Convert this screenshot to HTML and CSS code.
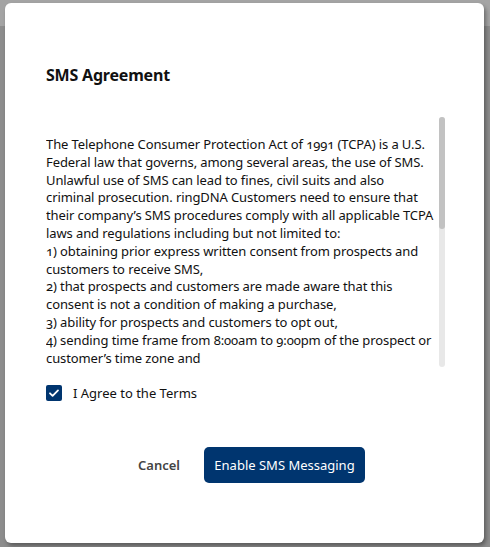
FILE: index.html
```html
<!DOCTYPE html>
<html lang="en">
<head>
<meta charset="utf-8">
<title>SMS Agreement</title>
<link rel="stylesheet" href="styles.css">
</head>
<body>
<div class="modal">
  <h2 class="title">SMS Agreement</h2>
  <div class="scroll-wrap">
    <div class="scroll">
      <p class="terms">The Telephone Consumer Protection Act of 1991 (TCPA) is a U.S.<br>Federal law that governs, among several areas, the use of SMS.<br>Unlawful use of SMS can lead to fines, civil suits and also<br>criminal prosecution. ringDNA Customers need to ensure that<br>their company’s SMS procedures comply with all applicable TCPA<br>laws and regulations including but not limited to:<br>1) obtaining prior express written consent from prospects and<br>customers to receive SMS,<br>2) that prospects and customers are made aware that this<br>consent is not a condition of making a purchase,<br>3) ability for prospects and customers to opt out,<br>4) sending time frame from 8:00am to 9:00pm of the prospect or<br>customer’s time zone and</p>
    </div>
    <div class="scrollbar"><div class="thumb"></div></div>
  </div>
  <label class="agree">
    <span class="box"><svg viewBox="0 0 16 16" width="16" height="16"><path d="M4 8.3l2.6 2.6L12 5.4" fill="none" stroke="#fff" stroke-width="1.8" stroke-linecap="round" stroke-linejoin="round"/></svg></span>
    <span class="agree-text">I Agree to the Terms</span>
  </label>
  <div class="actions">
    <button class="btn-cancel">Cancel</button>
    <button class="btn-primary">Enable SMS Messaging</button>
  </div>
</div>
</body>
</html>
```

FILE: styles.css
```css
html, body {
  margin: 0;
  padding: 0;
}
body {
  width: 490px;
  height: 547px;
  overflow: hidden;
  background: linear-gradient(#a4a4a4 0, #a4a4a4 26px, #8d8d8d 26px);
  font-family: "Noto Sans", "Open Sans", sans-serif;
  color: #111;
}
.modal {
  box-sizing: border-box;
  margin: 3px 0 0 5px;
  width: 479px;
  height: 540px;
  background: #fff;
  border-radius: 6px;
  box-shadow: 2px 3px 4px rgba(0, 0, 0, 0.35);
  padding: 60px 39px 0 41px;
}
.title {
  margin: 0;
  font-size: 16px;
  line-height: 24px;
  font-weight: 700;
  letter-spacing: -0.2px;
  color: #111;
}
.scroll-wrap {
  margin-top: 30px;
  height: 250px;
  display: flex;
}
.scroll {
  flex: 1;
  overflow: hidden;
}
.scrollbar {
  width: 6px;
  background: #e8e8e8;
  border-radius: 3px;
  flex: none;
}
.thumb {
  height: 112px;
  background: #c2c2c2;
  border-radius: 3px;
}
.terms {
  margin: 0;
  padding: 19px 0 0 0;
  font-size: 13px;
  line-height: 17.8px;
  letter-spacing: -0.1px;
  white-space: nowrap;
  font-variant-numeric: oldstyle-nums;
  color: #111;
}
.agree {
  margin-top: 18px;
  display: flex;
  align-items: center;
  gap: 11px;
  height: 16px;
}
.box {
  width: 16px;
  height: 16px;
  border-radius: 2px;
  background: #00356f;
  display: flex;
}
.agree-text {
  font-size: 13px;
  color: #111;
}
.actions {
  margin-top: 46px;
  display: flex;
  justify-content: center;
  gap: 12px;
}
.btn-cancel {
  border: 0;
  background: transparent;
  font-family: inherit;
  font-size: 13px;
  font-weight: 600;
  color: #444;
  padding: 0 12px;
  height: 36px;
}
.btn-primary {
  border: 0;
  background: #00356f;
  color: #fff;
  font-family: inherit;
  font-size: 13px;
  height: 36px;
  width: 161px;
  border-radius: 5px;
  padding: 0;
}
```
